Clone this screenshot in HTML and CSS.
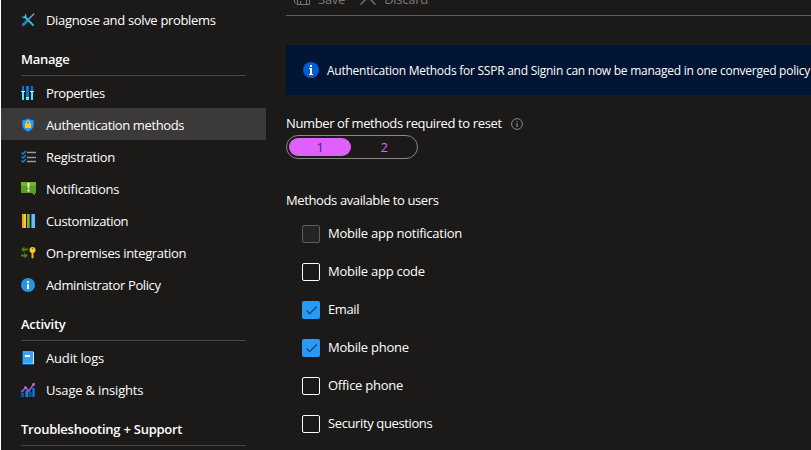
FILE: index.html
```html
<!DOCTYPE html>
<html lang="en">
<head>
<meta charset="utf-8">
<title>Password reset - Authentication methods</title>
<link rel="stylesheet" href="styles.css">
</head>
<body>
<div class="app">
  <nav class="sidebar">
    <a class="item"><svg class="icon" viewBox="0 0 14 14"><path d="M3.5 3.5 12.6 12.6" stroke="#32bedd" stroke-width="2"/><path d="M.6 3.5A2.8 2.8 0 0 0 5 4.6 2.8 2.8 0 0 0 3.9.5L4 2.7 2.7 3.8Z" fill="#32bedd"/><path d="M13.2.5 6 8" stroke="#5fb8d8" stroke-width="1.2"/><path d="M6.5 7.5 1.5 12.5" stroke="#1684cc" stroke-width="2.8"/></svg><span>Diagnose and solve problems</span></a>
    <h2 class="heading">Manage</h2>
    <a class="item"><svg class="icon" viewBox="0 0 14 14"><path d="M1 0h2v5H1zM5 0h3v11H5zM10 0h2v5h-2z" fill="#0078d4"/><path d="M1 6h2v8H1zM5 12h3v2H5zM10 6h2v8h-2z" fill="#50e6ff"/><path d="M0 5h4v1H0zM5 11h3v1H5zM9 5h4v1H9z" fill="#c3f1ff"/></svg><span class="tight">Properties</span></a>
    <a class="item selected"><svg class="icon" viewBox="0 0 14 14"><path d="M7 0C9 1.500 11 1.700 13 1.800V7c0 3.500-3.200 5.700-6 7-2.800-1.300-6-3.500-6-7V1.800C3 1.700 5 1.500 7 0Z" fill="#1471ca"/><path d="M7 1C9 2.300 10.500 2.500 12.200 2.600V7c0 3-2.700 5-5.200 6.100C4.500 12 1.800 10 1.800 7V2.600C3.500 2.500 5 2.300 7 1Z" fill="#369ef1"/><path d="M5.300 6V4.500a1.700 1.700 0 0 1 3.400 0V6" fill="none" stroke="#ffd75a"/><rect x="4" y="5.500" width="6" height="4.500" rx=".5" fill="#ffc51f"/></svg><span class="snug">Authentication methods</span></a>
    <a class="item"><svg class="icon wide" viewBox="0 0 16 14"><path d="M6 2.500h9M6 7.500h9M6 11.500h9" stroke="#999" stroke-width="1.500"/><path d="m.5 2.500 1.600 1.600L5 1M.5 6.500l1.600 1.600L5 5M.5 10.500l1.600 1.600L5 9" fill="none" stroke="#1d83d5" stroke-width="1.400"/></svg><span>Registration</span></a>
    <a class="item"><svg class="icon wide" viewBox="0 0 16 14"><path d="M0 0h15v11h-1v2.500L10.800 11H0z" fill="#5b9e20"/><path d="M0 0h15v4H0z" fill="#6eb52b"/><path d="M6.500 1h2l-.3 5.500H6.800zM6.500 7.500h2v2h-2z" fill="#fff"/></svg><span class="loose">Notifications</span></a>
    <a class="item"><svg class="icon" viewBox="0 0 14 14"><path d="M1 0h4v14H1z" fill="#faa21d"/><path d="M3 0h2v14H3z" fill="#ffca2c"/><path d="M6 0h3v14H6z" fill="#76bc2d"/><path d="M8 0h1v14H8z" fill="#56911f"/><path d="M10 0h4v14h-4z" fill="#6bb9f5"/><path d="M10 0h1v14h-1z" fill="#2988d8"/></svg><span class="snug">Customization</span></a>
    <a class="item"><svg class="icon wide" viewBox="0 0 16 14"><path d="M0 3.500 3.500.500v2H7v2H3.500v2zM7 9.500 3.500 6.800v1.700H0v2h3.500v2z" fill="#498205"/><circle cx="11.500" cy="4" r="3" fill="#ffca2c"/><path d="M10.500 6h2v5.500l-1 1-1-1z" fill="#efb51d"/><circle cx="11.500" cy="2.500" r=".7" fill="#624b0a"/></svg><span>On-premises integration</span></a>
    <a class="item"><svg class="icon" viewBox="0 0 14 14"><circle cx="7" cy="7" r="7" fill="#2795e6"/><path d="M6 3h2v2H6zM6 6h2v5H6z" fill="#fff"/></svg><span class="snug">Administrator Policy</span></a>
    <h2 class="heading">Activity</h2>
    <a class="item"><svg class="icon" viewBox="0 0 14 14"><path d="M2 0h10.500L13 1v11.500L12.500 14H2L1 13V1z" fill="#0b5896"/><path d="M2 0h10v12.500H2z" fill="#39a5ef"/><path d="M2 12h10v1H2z" fill="#75bce9"/><path d="M12 1h1v12h-1z" fill="#d8edf9"/><path d="M4 4h5v2H4z" fill="#fff"/></svg><span class="wider">Audit logs</span></a>
    <a class="item"><svg class="icon" viewBox="0 0 14 14"><path d="M0 10h3v4H0zM4 7.500h3V14H4zM7.500 9h3v5h-3zM11 5h3v9h-3z" fill="#0b5aa0"/><path d="M5 7.500h2V14H5zM12 5h1v9h-1z" fill="#1683d9"/><path d="M1 8.500 4.500 4.500 8 7.800 12.700 1.300" fill="none" stroke="#9464dc" stroke-width="1.500"/><circle cx="1.200" cy="8.300" r="1.200" fill="#8052cf"/><circle cx="4.500" cy="4.500" r="1.300" fill="#a87be8"/><circle cx="8" cy="7.800" r="1.300" fill="#8052cf"/><circle cx="12.600" cy="1.400" r="1.400" fill="#a87be8"/></svg><span class="wider">Usage &amp; insights</span></a>
    <h2 class="heading">Troubleshooting + Support</h2>
  </nav>
  <main class="content">
    <div class="toolbar">
      <div class="command"><svg class="cmd-icon" viewBox="0 0 16 16"><path d="M.5.500h13l2 2v13H3L.5 13zM3.500 15.500v-6h9v6M6.500 15.500v-3.500M4 .5v5h8v-5" fill="none" stroke="currentColor"/></svg><span>Save</span></div>
      <div class="command"><svg class="cmd-icon" viewBox="0 0 16 16"><path d="M.5.500 15.500 15.500M15.500.500.5 15.500" stroke="currentColor" stroke-width="1.400"/></svg><span>Discard</span></div>
    </div>
    <div class="banner"><svg class="banner-icon" viewBox="0 0 16 16"><circle cx="8" cy="8" r="8" fill="#015cda"/><path d="M7 3h2v2H7zM7 6h2v7H7z" fill="#fff"/><path d="M6 6h2v1H6zM6 12h4v1H6z" fill="#fff"/></svg><span>Authentication Methods for SSPR and Signin can now be managed in one converged policy</span></div>
    <div class="label"><span class="snug">Number of methods required to reset</span><svg class="hint" viewBox="0 0 12 12"><circle cx="6" cy="6" r="5.400" fill="none" stroke="#8a8886"/><path d="M5.500 3h1v1h-1zM5.500 5h1v4h-1z" fill="#a19f9d"/></svg></div>
    <div class="toggle"><span class="option active">1</span><span class="option">2</span></div>
    <div class="label methods"><span class="snug">Methods available to users</span></div>
    <div class="checks">
      <label class="check"><span class="box disabled"></span><span class="name loose">Mobile app notification</span></label>
      <label class="check"><span class="box"></span><span class="name loose">Mobile app code</span></label>
      <label class="check"><span class="box checked"><svg class="tick" viewBox="0 0 18 18"><path d="m4.500 9.500 3.200 3.200 7-7.200" fill="none" stroke="#173e60" stroke-width="1.100"/></svg></span><span class="name snug">Email</span></label>
      <label class="check"><span class="box checked"><svg class="tick" viewBox="0 0 18 18"><path d="m4.500 9.500 3.200 3.200 7-7.200" fill="none" stroke="#173e60" stroke-width="1.100"/></svg></span><span class="name">Mobile phone</span></label>
      <label class="check"><span class="box"></span><span class="name">Office phone</span></label>
      <label class="check"><span class="box"></span><span class="name snug">Security questions</span></label>
    </div>
  </main>
</div>
</body>
</html>
```
FILE: styles.css
```css
* { box-sizing: border-box; }
body {
  margin: 0;
  overflow: hidden;
  background: #1b1a19;
  color: #fff;
  font: 13px/18px "Open Sans", "Noto Sans", sans-serif;
  letter-spacing: -0.25px;
}
svg { display: block; flex: none; }
.app {
  display: flex;
  height: 450px;
  overflow: hidden;
  border-left: 1px solid #fff;
  white-space: nowrap;
}
.sidebar { flex: none; width: 265px; padding-top: 3px; }
.item {
  display: flex;
  align-items: center;
  height: 32px;
  padding: 2px 0 0 20px;
  letter-spacing: -0.33px;
}
.item span { margin-left: 11px; }
.item .tight { letter-spacing: -0.42px; }
.snug, .item .snug { letter-spacing: -0.38px; }
.loose, .item .loose { letter-spacing: -0.25px; }
.item .wider { letter-spacing: -0.17px; }
.icon { width: 14px; height: 14px; }
.wide { width: 16px; margin-right: -2px; }
.selected { background: #3b3a39; }
.heading {
  height: 41px;
  margin: 0 20px;
  padding-top: 15px;
  border-bottom: 1px solid #484644;
  font-size: 13px;
  line-height: 18px;
  font-weight: 600;
}
.content { flex: 1; min-width: 0; padding-left: 20px; }
.toolbar {
  display: flex;
  gap: 15px;
  height: 16px;
  padding-left: 8px;
  border-bottom: 1px solid #605e5c;
  color: #797775;
}
.command { display: flex; align-items: flex-end; height: 5px; }
.cmd-icon { width: 16px; height: 16px; margin-right: 8px; }
.command span { margin-bottom: -3px; line-height: 18px; }
.banner {
  display: flex;
  align-items: center;
  height: 50px;
  margin-top: 29px;
  padding-left: 17px;
  border-radius: 2px 0 0 2px;
  background: #001433;
  font-size: 12px;
}
.banner-icon { width: 16px; height: 16px; }
.banner span { margin-left: 8px; padding-top: 2px; }
.label { display: flex; align-items: center; height: 18px; margin-top: 20px; }
.label span { padding-bottom: 2px; }
.hint { width: 12px; height: 12px; margin-left: 9px; }
.toggle {
  display: flex;
  width: 132px;
  height: 24px;
  margin-top: 2px;
  padding: 2px;
  border: 1px solid #8a8886;
  border-radius: 12px;
}
.option { width: 62px; margin-right: 2px; border-radius: 9px; line-height: 19px; text-align: center; color: #df5fff; }
.active { background: #df5fff; color: #4b2057; }
.option:last-child { margin-right: 0; }
.methods { margin-top: 32px; }
.methods span { padding-bottom: 0; }
.checks { display: grid; gap: 20px; margin-top: 16px; padding-left: 16px; }
.check { display: flex; align-items: center; height: 18px; gap: 8px; }
.name { padding-bottom: 2px; }
.box { flex: none; width: 18px; height: 18px; border: 1px solid #fff; border-radius: 2px; }
.disabled { border-color: #605e5c; background: #252423; }
.checked { border: 0; background: #2899f5; }
.tick { width: 18px; height: 18px; }
```
